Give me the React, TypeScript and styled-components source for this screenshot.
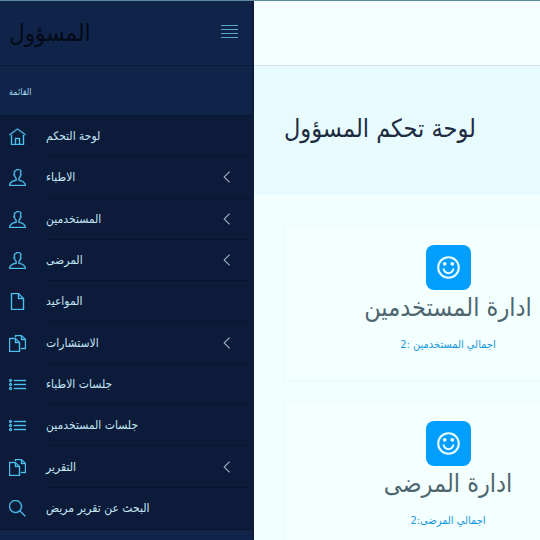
import React from "react";
import styled, { createGlobalStyle } from "styled-components";
import {
  TfiAngleLeft,
  TfiFile,
  TfiFiles,
  TfiHome,
  TfiList,
  TfiSearch,
  TfiUser,
} from "react-icons/tfi";
import type { IconType } from "react-icons";

const GlobalStyle = createGlobalStyle`
  *, *::before, *::after { box-sizing: border-box; }
  body {
    margin: 0;
    background: #f2ffff;
    font-family: "DejaVu Sans Condensed", "DejaVu Sans", sans-serif;
  }
`;

const Page = styled.div`
  display: flex;
  height: 100vh;
  overflow: hidden;
  border-top: 1px solid #5f8a9d;
`;

const Sidebar = styled.aside`
  flex: 0 0 254px;
  background: #102449;
  border-right: 2px solid #0d1b3a;
`;

const Brand = styled.div`
  display: flex;
  align-items: center;
  justify-content: space-between;
  height: 65px;
  padding: 0 14px 0 9px;
  border-bottom: 1px solid #0b1b3a;
`;

const BrandLink = styled.a`
  color: #030a18;
  font-size: 24px;
  line-height: 32px;
  text-decoration: none;
`;

const Toggle = styled.button`
  display: flex;
  padding: 0 0 3px;
  border: 0;
  background: none;
  color: #58a3c9;
  cursor: pointer;
`;

const MenuHeading = styled.h2`
  display: flex;
  align-items: center;
  height: 50px;
  margin: 0;
  padding: 2px 9px 0;
  border-bottom: 1px solid #0b1733;
  color: #a5dcf0;
  font-size: 9px;
  font-weight: 400;
`;

const Menu = styled.ul`
  display: grid;
  grid-auto-rows: 1fr;
  min-height: 414px;
  margin: 0;
  padding: 0;
  border-bottom: 1px solid #09142d;
  background: #0c1b39;
  list-style: none;
`;

const MenuItem = styled.li`
  display: flex;
`;

const MenuLink = styled.a`
  display: flex;
  flex: 1;
  align-items: center;
  padding-left: 9px;
  color: #c3e6f5;
  font-size: 12px;
  text-decoration: none;
`;

const MenuIcon = styled.span`
  display: flex;
  width: 37px;
  color: #4cc0ee;
  font-size: 17px;

  svg {
    stroke-width: 0.4;
  }
`;

const MenuText = styled.span<{ $last: boolean }>`
  display: flex;
  flex: 1;
  align-items: center;
  justify-content: space-between;
  align-self: stretch;
  margin-right: 4px;
  padding-right: 15px;
  border-bottom: ${(p) => (p.$last ? "0" : "1px solid #09142e")};
`;

const Arrow = styled.span`
  display: flex;
  color: #b4c9e0;
  font-size: 12px;

  svg {
    stroke-width: 0.5;
  }
`;

const Main = styled.main`
  flex: 1;
  min-width: 0;
  overflow: hidden;
  background: #f2ffff;
`;

const TopBar = styled.header`
  height: 65px;
  border-bottom: 1px solid #d3e4ea;
  background: #f6ffff;
`;

const TitleBand = styled.section`
  display: flex;
  align-items: center;
  height: 129px;
  padding: 0 30px 4px;
  background: #e8fcff;
`;

const Title = styled.h1`
  margin: 0;
  color: #1c2b3f;
  font-size: 25px;
  font-weight: 400;
  line-height: 32px;
  white-space: nowrap;
`;

const Cards = styled.div`
  display: grid;
  grid-template-columns: repeat(auto-fit, minmax(328px, 1fr));
  gap: 20px;
  padding: 30px;
`;

const Card = styled.article`
  display: flex;
  flex-direction: column;
  align-items: center;
  height: 156px;
  padding-top: 19px;
  border: 1px solid #e9f8fa;
  background: #f4ffff;
`;

const Badge = styled.span`
  display: flex;
  align-items: center;
  justify-content: center;
  width: 45px;
  height: 45px;
  border-radius: 8px;
  background: #009fff;
  color: #e9fcff;
`;

const CardTitle = styled.h2`
  margin: 0;
  color: #4d666f;
  font-size: 25px;
  font-weight: 400;
  line-height: 36px;
`;

const CardLink = styled.a`
  margin-top: 10px;
  color: #1597dd;
  font-size: 11px;
  line-height: 18px;
  text-decoration: none;
`;

type Entry = { icon: IconType; label: string; nested?: boolean };

const entries: Entry[] = [
  { icon: TfiHome, label: "لوحة التحكم" },
  { icon: TfiUser, label: "الاطباء", nested: true },
  { icon: TfiUser, label: "المستخدمين", nested: true },
  { icon: TfiUser, label: "المرضى", nested: true },
  { icon: TfiFile, label: "المواعيد" },
  { icon: TfiFiles, label: "الاستشارات", nested: true },
  { icon: TfiList, label: "جلسات الاطباء" },
  { icon: TfiList, label: "جلسات المستخدمين" },
  { icon: TfiFiles, label: "التقرير", nested: true },
  { icon: TfiSearch, label: "البحث عن تقرير مريض" },
];

const cards = [
  { title: "ادارة المستخدمين", total: "اجمالي المستخدمين :2" },
  { title: "ادارة المرضى", total: "اجمالي المرضى:2" },
];

function Bars() {
  return (
    <svg width="17" height="13" viewBox="0 0 17 13" fill="currentColor" aria-hidden="true">
      <path d="M0 0h17v1H0zM0 4h17v1H0zM0 8h17v1H0zM0 12h17v1H0z" />
    </svg>
  );
}

function Smile() {
  return (
    <svg width="23" height="23" viewBox="0 0 23 23" fill="none" aria-hidden="true">
      <circle cx="11.5" cy="11.5" r="10.3" stroke="currentColor" strokeWidth="2.1" />
      <circle cx="7.7" cy="7.8" r="1.9" fill="currentColor" />
      <circle cx="15.3" cy="7.8" r="1.9" fill="currentColor" />
      <path
        d="M6.7 13.3C8.4 18.4 14.6 18.4 16.3 13.3"
        stroke="currentColor"
        strokeWidth="2"
        strokeLinecap="round"
      />
    </svg>
  );
}

export default function App() {
  return (
    <>
      <GlobalStyle />
      <Page lang="ar">
        <Sidebar>
          <Brand>
            <BrandLink href="#">المسؤول</BrandLink>
            <Toggle type="button" aria-label="القائمة">
              <Bars />
            </Toggle>
          </Brand>
          <nav>
            <MenuHeading>القائمة</MenuHeading>
            <Menu>
              {entries.map(({ icon: Icon, label, nested }, i) => (
                <MenuItem key={label}>
                  <MenuLink href="#">
                    <MenuIcon>
                      <Icon />
                    </MenuIcon>
                    <MenuText $last={i === entries.length - 1}>
                      {label}
                      {nested && (
                        <Arrow>
                          <TfiAngleLeft />
                        </Arrow>
                      )}
                    </MenuText>
                  </MenuLink>
                </MenuItem>
              ))}
            </Menu>
          </nav>
        </Sidebar>
        <Main>
          <TopBar />
          <TitleBand>
            <Title>لوحة تحكم المسؤول</Title>
          </TitleBand>
          <Cards>
            {cards.map((card) => (
              <Card key={card.title}>
                <Badge>
                  <Smile />
                </Badge>
                <CardTitle>{card.title}</CardTitle>
                <CardLink href="#" dir="ltr">
                  {card.total}
                </CardLink>
              </Card>
            ))}
          </Cards>
        </Main>
      </Page>
    </>
  );
}
